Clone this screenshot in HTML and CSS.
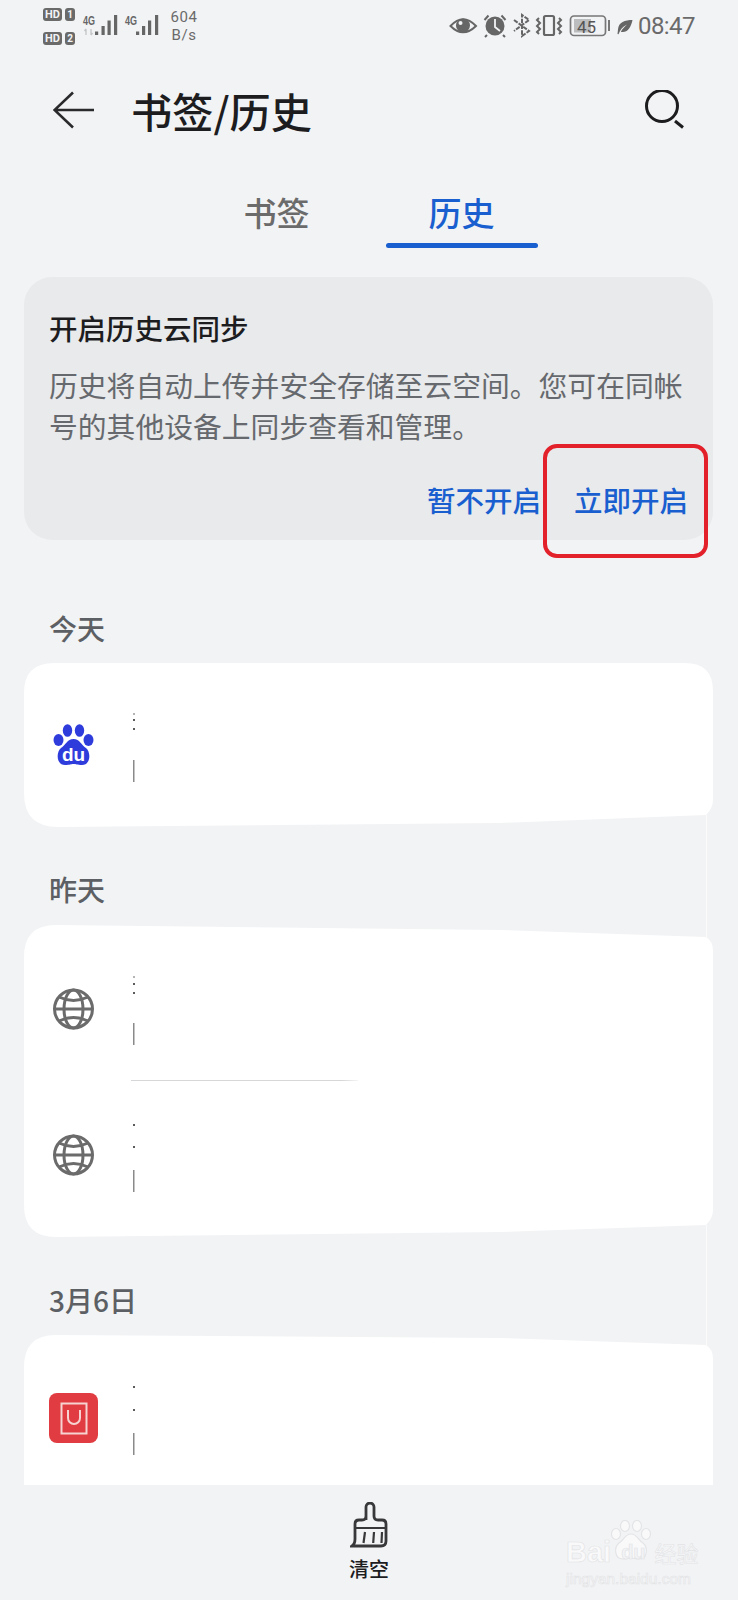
FILE: index.html
```html
<!DOCTYPE html>
<html lang="zh-CN">
<head>
  <meta charset="UTF-8">
  <meta name="viewport" content="width=device-width, initial-scale=1.0">
  <title>书签/历史</title>
  <link rel="stylesheet" href="styles.css">
</head>
<body>
  <div class="page">
    <!-- 状态栏 -->
    <div class="status">
      <div class="sims">
        <div class="sim"><span class="hd">HD</span><span class="num">1</span></div>
        <div class="sim"><span class="hd">HD</span><span class="num">2</span></div>
      </div>
      <svg class="signal" width="80" height="52" viewBox="80 0 80 52">
        <text x="83" y="25" class="net" textLength="12" lengthAdjust="spacingAndGlyphs">4G</text>
        <path d="M86 29v6M84.500 31l1.500-2M91 29v6M92.500 33l-1.500 2" stroke="#c4c5c7" stroke-width="1.300" fill="none"/>
        <rect x="95" y="31.500" width="3.200" height="3.500" fill="#666"/>
        <rect x="101.500" y="26" width="3.200" height="9" fill="#666"/>
        <rect x="107.500" y="20.500" width="3.200" height="14.500" fill="#666"/>
        <rect x="114" y="15" width="3.200" height="20" fill="#666"/>
        <text x="125" y="25" class="net" textLength="12" lengthAdjust="spacingAndGlyphs">4G</text>
        <rect x="136" y="31.500" width="3.200" height="3.500" fill="#666"/>
        <rect x="142" y="26" width="3.200" height="9" fill="#666"/>
        <rect x="148" y="20.500" width="3.200" height="14.500" fill="#666"/>
        <rect x="155" y="15" width="3.200" height="20" fill="#666"/>
      </svg>
      <div class="speed"><span>604</span><span>B/s</span></div>
      <svg class="sys" width="164" height="52" viewBox="448 0 164 52">
        <!-- 护眼 -->
        <path d="M450.500 26Q463 12.500 476 26Q463 38.500 450.500 26Z" fill="none" stroke="#666" stroke-width="2"/>
        <circle cx="463" cy="25.500" r="7" fill="#666"/>
        <circle cx="460.500" cy="23" r="2" fill="#f2f3f5"/>
        <!-- 闹钟 -->
        <circle cx="495" cy="26" r="9.500" fill="#666"/>
        <path d="M495 19v8l5 4" stroke="#f2f3f5" stroke-width="1.800" fill="none"/>
        <path d="M484.500 20l4-4.500M505.500 20l-4-4.500M487 35l-2 2M503 35l2 2" stroke="#666" stroke-width="2" fill="none"/>
        <!-- 蓝牙 -->
        <path d="M514 20l15 11-7 5V15l7 5-15 11" stroke="#666" stroke-width="2" fill="none" stroke-dasharray="4.500 1.200"/>
        <!-- 振动 -->
        <rect x="544" y="16" width="10" height="19" rx="1.500" fill="none" stroke="#666" stroke-width="2.200"/>
        <path d="M539 18l-2 2 3 3-3 3 3 3-3 3 2 2M559 18l2 2-3 3 3 3-3 3 3 3-2 2" stroke="#666" stroke-width="2" fill="none"/>
        <!-- 电池 -->
        <rect x="570.500" y="16" width="35" height="19.500" rx="3.500" fill="none" stroke="#777" stroke-width="1.700"/>
        <rect x="574" y="19" width="17" height="13.500" fill="#bcbdbf"/>
        <text x="577" y="32.500" class="batt">45</text>
        <rect x="608" y="20" width="2" height="11" fill="#777"/>
      </svg>
      <svg class="leaf" width="16" height="16" viewBox="0 0 16 16">
        <path d="M15.500 1C8 1 1.500 3 1 10.500L.5 15l1 .3 1.500-3.300C5 8 8 6.500 10 5.500 8 7.500 5.500 9.500 3.800 12.800 9.500 14.500 14 9 15.500 1Z" fill="#666"/>
      </svg>
      <span class="time">08:47</span>
    </div>

    <!-- 标题栏 -->
    <div class="head">
      <svg width="42" height="38" viewBox="0 0 42 38">
        <path d="M1 19H41M20 1.500L1.500 19 20 36.500" fill="none" stroke="#2a2a2c" stroke-width="2.600"/>
      </svg>
      <h1>书签/历史</h1>
      <svg class="search" width="40" height="40" viewBox="0 0 40 40">
        <circle cx="17" cy="16" r="15.500" fill="none" stroke="#1c1c1e" stroke-width="3"/>
        <path d="M30 31l8 6.500" stroke="#1c1c1e" stroke-width="3" fill="none"/>
      </svg>
    </div>

    <div class="tabs">
      <div class="tab">书签</div>
      <div class="tab active">历史</div>
    </div>

    <!-- 云同步提示 -->
    <div class="sync">
      <h2>开启历史云同步</h2>
      <p>历史将自动上传并安全存储至云空间。您可在同帐号的其他设备上同步查看和管理。</p>
      <div class="actions">
        <span>暂不开启</span>
        <span>立即开启</span>
      </div>
    </div>

    <div class="day">今天</div>
    <div class="card card-today">
      <div class="row">
        <svg class="icon" width="50" height="50" viewBox="0 0 50 50">
          <ellipse cx="9.500" cy="20" rx="5" ry="6" fill="#2f3cdc"/>
          <ellipse cx="18.500" cy="10.500" rx="4.700" ry="6.300" fill="#2f3cdc"/>
          <ellipse cx="30.500" cy="10.500" rx="4.700" ry="6.300" fill="#2f3cdc"/>
          <ellipse cx="39.500" cy="20" rx="5" ry="6" fill="#2f3cdc"/>
          <path d="M24.500 19C31 19 32 25 37 28 42 32 42 45 33 45 28 45 27 44 24.500 44 22 44 21 45 16 45 7 45 7 32 12 28 17 25 18 19 24.500 19Z" fill="#2f3cdc"/>
          <text x="24.500" y="41" class="du">du</text>
        </svg>
        <svg class="stub" width="4" height="78" viewBox="0 0 4 78">
          <circle cx="2" cy="8" r=".8" fill="#555"/><circle cx="2" cy="14" r="1.100" fill="#333"/><circle cx="2" cy="23" r="1.100" fill="#333"/>
          <rect x="1" y="54" width="1.500" height="22" fill="#8a8a8a"/>
        </svg>
      </div>
    </div>

    <div class="day">昨天</div>
    <div class="card card-yesterday">
      <div class="row row-first">
        <svg class="icon" width="50" height="50" viewBox="0 0 50 50">
          <circle cx="24.500" cy="25" r="19" fill="none" stroke="#6b6b6b" stroke-width="3"/>
          <ellipse cx="24.500" cy="25" rx="9.500" ry="19" fill="none" stroke="#6b6b6b" stroke-width="3"/>
          <path d="M6 25H43M10 13Q24.500 20 39 13M10 37Q24.500 30 39 37" fill="none" stroke="#6b6b6b" stroke-width="3"/>
        </svg>
        <svg class="stub" width="4" height="78" viewBox="0 0 4 78">
          <circle cx="2" cy="7" r=".8" fill="#555"/><circle cx="2" cy="14" r="1.100" fill="#333"/><circle cx="2" cy="23" r="1.100" fill="#333"/>
          <rect x="1" y="53" width="1.500" height="22" fill="#8a8a8a"/>
        </svg>
      </div>
      <div class="divider"></div>
      <div class="row row-last">
        <svg class="icon" width="50" height="50" viewBox="0 0 50 50">
          <circle cx="24.500" cy="25" r="19" fill="none" stroke="#6b6b6b" stroke-width="3"/>
          <ellipse cx="24.500" cy="25" rx="9.500" ry="19" fill="none" stroke="#6b6b6b" stroke-width="3"/>
          <path d="M6 25H43M10 13Q24.500 20 39 13M10 37Q24.500 30 39 37" fill="none" stroke="#6b6b6b" stroke-width="3"/>
        </svg>
        <svg class="stub" width="4" height="78" viewBox="0 0 4 78">
          <circle cx="2" cy="9" r="1.100" fill="#333"/><circle cx="2" cy="31" r="1.100" fill="#333"/>
          <rect x="1" y="54" width="1.500" height="22" fill="#8a8a8a"/>
        </svg>
      </div>
    </div>

    <div class="day day-cut">3月6日</div>
    <div class="card card-march">
      <div class="row row-full">
        <svg class="icon" width="50" height="50" viewBox="0 0 50 50">
          <rect width="49" height="50" rx="8" fill="#e03c41"/>
          <rect x="12.500" y="10.500" width="25" height="30" fill="none" stroke="#f6d2d0" stroke-width="2"/>
          <path d="M19 17V25A6 6 0 0 0 31 25V17" fill="none" stroke="#f6d2d0" stroke-width="2"/>
        </svg>
        <svg class="stub" width="4" height="78" viewBox="0 0 4 78">
          <circle cx="2" cy="8" r="1.100" fill="#333"/><circle cx="2" cy="31" r="1.100" fill="#333"/>
          <rect x="1" y="54" width="1.500" height="22" fill="#8a8a8a"/>
        </svg>
      </div>
    </div>

    <!-- 底部 -->
    <div class="bottom">
      <svg width="38" height="46" viewBox="349 1502 38 46">
        <path d="M365 1520V1507a4 4 0 0 1 8 0V1516q0 4 4 4h4q4 0 4 4V1541q0 5-5 5H351q3-2 3-7V1524q0-4 4-4h3q4 0 4-4Z" fill="none" stroke="#38383a" stroke-width="2.800"/>
        <path d="M354 1528H385M364 1532l-1.500 11M373 1532l-.8 11M381 1532l-.5 11" fill="none" stroke="#38383a" stroke-width="2.200"/>
      </svg>
      <span>清空</span>
    </div>

    <!-- 标注和水印 -->
    <div class="mark"></div>
    <div class="seam seam-a"></div>
    <div class="seam seam-b"></div>
    <div class="water">
      <svg class="water-paw" width="42" height="40" viewBox="0 0 42 40">
        <g fill="#f9f9fa" stroke="#e3e4e6" stroke-width="1.200">
          <ellipse cx="6" cy="14" rx="4.500" ry="5.500"/>
          <ellipse cx="15" cy="6" rx="4.500" ry="5.500"/>
          <ellipse cx="27" cy="6" rx="4.500" ry="5.500"/>
          <ellipse cx="36" cy="14" rx="4.500" ry="5.500"/>
          <path d="M21 14C27 14 28 20 33 23 38 27 38 39 29 39 25 39 24 38 21 38 18 38 17 39 13 39 4 39 4 27 9 23 14 20 15 14 21 14Z"/>
        </g>
      </svg>
      <div class="water-top"><span class="bai">Bai</span><span class="water-du">du</span><span class="jy">经验</span></div>
      <div class="water-url">jingyan.baidu.com</div>
    </div>
  </div>
</body>
</html>
```

FILE: styles.css
```css
* {
  box-sizing: border-box;
}

body {
  margin: 0;
  background-color: #f2f3f5;
  font-family: "Noto Sans CJK SC", "Noto Sans", sans-serif;
}

.page {
  position: relative;
  display: flex;
  flex-direction: column;
  width: 738px;
  height: 1600px;
  overflow: hidden;
}

/* 状态栏 */
.status {
  display: flex;
  align-items: flex-start;
  height: 52px;
  padding-left: 43px;
  flex-shrink: 0;
  color: #6a6a6a;
  font-family: Roboto, sans-serif;
}

.sims {
  display: flex;
  flex-direction: column;
  gap: 11px;
  width: 37px;
  padding-top: 8px;
}

.sim {
  display: flex;
  gap: 3px;
}

.hd,
.num {
  height: 13px;
  border-radius: 3px;
  background-color: #6a6a6a;
  color: #f2f3f5;
  font-size: 11px;
  font-weight: 700;
  line-height: 13px;
  text-align: center;
}

.hd {
  width: 19px;
}

.num {
  width: 10px;
  font-size: 10px;
}

.net {
  font-family: "Liberation Sans", sans-serif;
  font-size: 13.500px;
  font-weight: 700;
  fill: #666;
}

.speed {
  display: flex;
  flex-direction: column;
  align-items: center;
  width: 30px;
  margin-left: 9px;
  padding-top: 8px;
  font-size: 15px;
  line-height: 18px;
  letter-spacing: .5px;
}

.sys {
  margin-left: 249px;
}

.batt {
  font-family: Roboto, sans-serif;
  font-size: 17px;
  fill: #555;
}

.leaf {
  margin: 19px 0 0 5px;
}

.time {
  margin-left: 5px;
  font-size: 24px;
  line-height: 52px;
  letter-spacing: -.6px;
}

/* 标题栏 */
.head {
  display: flex;
  align-items: center;
  height: 116px;
  padding: 0 53px;
  flex-shrink: 0;
}

.head h1 {
  margin: 0 0 0 36px;
  color: #1d1d1f;
  font-size: 41.200px;
  font-weight: 500;
  line-height: 50px;
}

.search {
  margin-left: auto;
}

.tabs {
  display: flex;
  justify-content: center;
  gap: 33px;
  flex-shrink: 0;
}

.tab {
  width: 152px;
  padding: 24px 0 16px;
  color: #6b6b6b;
  font-size: 33px;
  font-weight: 500;
  line-height: 40px;
  text-align: center;
}

.tab.active {
  position: relative;
  color: #1a5fcf;
}

.tab.active::after {
  content: "";
  position: absolute;
  left: 0;
  right: 0;
  bottom: 0;
  height: 5px;
  border-radius: 3px;
  background-color: #1a5fcf;
}

/* 云同步提示 */
.sync {
  height: 263px;
  margin: 29px 25px 0 24px;
  padding: 31px 18px 0 25px;
  border-radius: 28px;
  background-color: #e9eaec;
  flex-shrink: 0;
}

.sync h2 {
  margin: 0;
  color: #1d1d1f;
  font-size: 28.500px;
  font-weight: 500;
  line-height: 40px;
}

.sync p {
  margin: 16px 0 0;
  color: #66696d;
  font-size: 28.800px;
  line-height: 41px;
}

.actions {
  display: flex;
  justify-content: flex-end;
  gap: 33px;
  margin-top: 34px;
  padding-right: 7px;
  color: #1a5fcf;
  font-size: 28.500px;
  font-weight: 500;
  line-height: 40px;
}

/* 历史记录 */
.day {
  height: 40px;
  margin: 44px 0 14px;
  padding-left: 49px;
  color: #5c5f63;
  font-size: 28px;
  font-weight: 500;
  line-height: 36px;
  flex-shrink: 0;
}

.sync + .day {
  margin-top: 70px;
  margin-bottom: 13px;
}

.day-cut {
  margin: 45px 0 13px;
}

.card {
  width: 689px;
  margin-left: 24px;
  background-color: #fff;
  flex-shrink: 0;
}

.card-today {
  height: 164px;
  clip-path: path("M30 0H661Q689 0 689 28V137Q689 145 682 152L476 160 34 164Q0 164 0 130V30Q0 0 30 0Z");
}

.card-yesterday {
  height: 312px;
  clip-path: path("M32 0L476 5 682 12Q689 16 689 26V285Q689 293 682 300L476 307 32 312Q0 312 0 280V32Q0 0 32 0Z");
}

.card-march {
  height: 150px;
  clip-path: path("M32 0L476 3 682 10Q689 14 689 24V150H0V32Q0 0 32 0Z");
}

.row {
  display: flex;
  align-items: center;
  gap: 33px;
  height: 164px;
  padding-left: 25px;
}

.row-first {
  height: 155px;
  padding-top: 12px;
}

.row-last {
  height: 156px;
  padding-bottom: 8px;
}

.row-full {
  height: 166px;
}

.icon {
  flex-shrink: 0;
}

.du {
  fill: #fff;
  font-family: "Liberation Sans", sans-serif;
  font-size: 19px;
  font-weight: 700;
  text-anchor: middle;
}

.divider {
  width: 227px;
  height: 1px;
  margin-left: 107px;
  background: linear-gradient(to right, #d6d7d9 93%, #f4f4f5);
}

/* 底部 */
.bottom {
  display: flex;
  flex-direction: column;
  align-items: center;
  margin-top: auto;
  height: 115px;
  padding-top: 17px;
  color: #1d1d1f;
  font-size: 20px;
  font-weight: 500;
  line-height: 30px;
}

.bottom span {
  margin-top: 6px;
}

/* 红框标注 */
.mark {
  position: absolute;
  left: 543px;
  top: 444px;
  width: 165px;
  height: 114px;
  border: 4px solid #e2212b;
  border-radius: 14px;
}

.seam {
  position: absolute;
  left: 706px;
  width: 1px;
  background-color: #fbfbfc;
}

.seam-a {
  top: 815px;
  height: 122px;
}

.seam-b {
  top: 1225px;
  height: 120px;
}

/* 水印 */
.water {
  position: absolute;
  left: 566px;
  top: 1520px;
  width: 134px;
  height: 66px;
  color: #f9f9fa;
  font-family: "Liberation Sans", sans-serif;
  -webkit-text-stroke: .6px #e2e3e5;
}

.water-paw {
  position: absolute;
  left: 44px;
  top: 0;
}

.water-top {
  position: relative;
  display: flex;
  align-items: center;
  height: 48px;
  padding-top: 16px;
  white-space: nowrap;
}

.bai {
  font-size: 29px;
  font-weight: 700;
}

.water-du {
  margin-left: 10px;
  color: #f2f3f5;
  font-size: 20px;
  font-weight: 700;
}

.jy {
  margin-left: 9px;
  font-family: "Noto Sans CJK SC", sans-serif;
  font-size: 22px;
  line-height: 30px;
}

.water-url {
  margin-top: 2px;
  font-size: 15.500px;
  line-height: 18px;
}
```
